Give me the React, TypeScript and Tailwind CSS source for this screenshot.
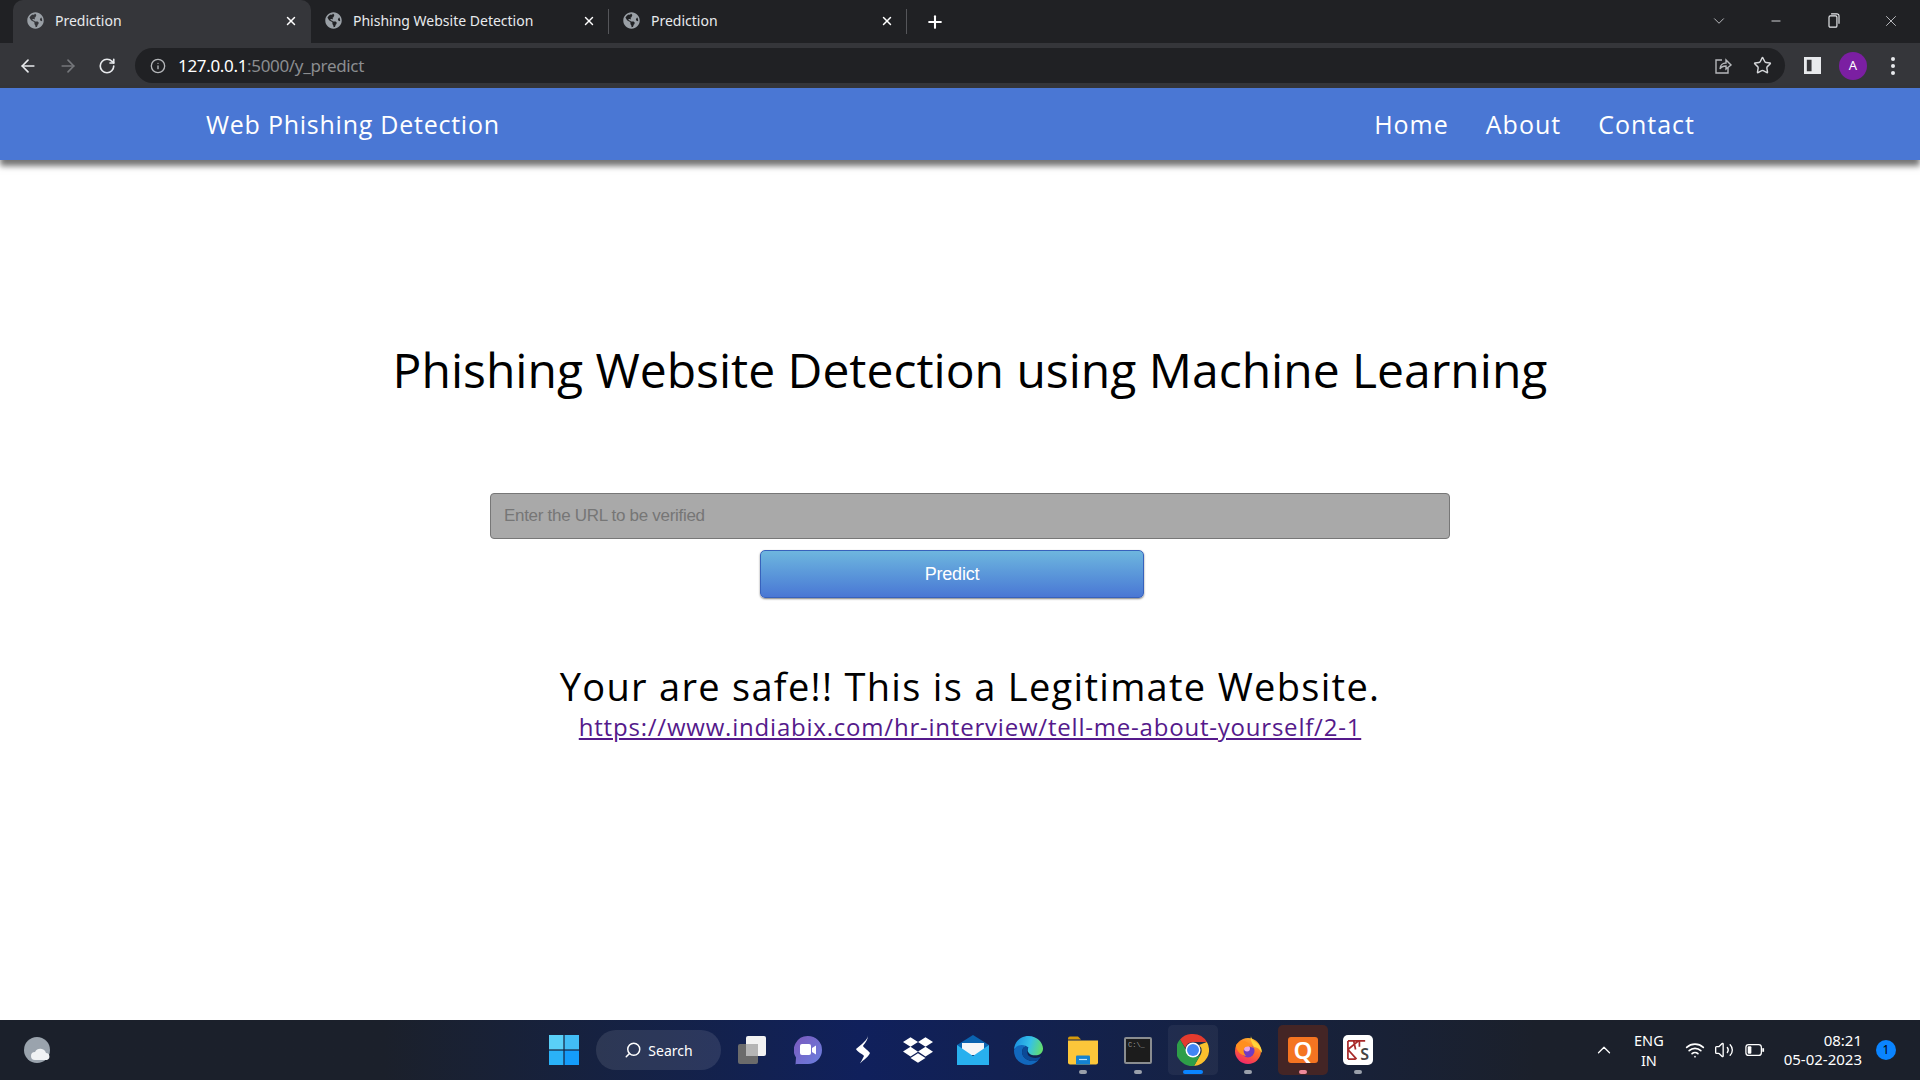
import { FaGlobeAmericas, FaDropbox } from "react-icons/fa";
import { ArrowLeft, ArrowRight, RotateCw, Info, Star, X, Plus, ChevronDown, Minus, ChevronUp, Search, Wifi, Volume2 } from "lucide-react";

const tabs = [
  { title: "Prediction", active: true },
  { title: "Phishing Website Detection", active: false },
  { title: "Prediction", active: false },
];

const Tab = ({ title, active, divider }: { title: string; active: boolean; divider: boolean }) => (
  <div
    className={`relative flex h-[43px] w-[298px] shrink-0 items-center pr-[13px] pb-[2px] pl-[17px] ${
      active ? "rounded-t-[10px] bg-[#35363a]" : ""
    }`}
  >
    <FaGlobeAmericas className="-ml-[3px] size-[17px] shrink-0 text-[#9aa0a6]" />
    <span className="ml-[11px] flex-1 truncate text-[14px] text-[#e8eaed]">{title}</span>
    <X className="size-[14px] text-white" strokeWidth={2.5} />
    {divider && <span className="absolute top-[9px] right-0 h-[25px] w-px bg-[#55565a]" />}
  </div>
);

const TabStrip = () => (
  <div className="flex h-[43px] items-center bg-[#202124] pl-[13px]">
    {tabs.map((t, i) => (
      <Tab key={i} title={t.title} active={t.active} divider={i > 0} />
    ))}
    <Plus className="ml-[18px] size-[20px] text-white" strokeWidth={2.5} />
    <div className="ml-auto flex items-center pb-[2px] text-[#e8eaed]">
      <ChevronDown className="mr-[41px] size-[18px]" strokeWidth={1} />
      <Minus className="mr-[45px] size-[14px]" strokeWidth={1.5} />
      <svg viewBox="0 0 14 18" className="mr-[42px] h-[15px] w-[12px]" fill="none" stroke="currentColor" strokeWidth="1.4">
        <rect x="1" y="3.5" width="9.5" height="13.5" rx="1.5" />
        <path d="M3.5 1h7a2.5 2.5 0 0 1 2.5 2.5V13" />
      </svg>
      <X className="mr-[20px] size-[18px]" strokeWidth={1} />
    </div>
  </div>
);

const Toolbar = () => (
  <div className="flex h-[45px] items-start bg-[#35363a] pt-[5px]">
    <div className="flex h-[35px] w-[135px] shrink-0 items-center pl-[18px]">
      <ArrowLeft className="size-[20px] text-[#e8eaed]" strokeWidth={2} />
      <ArrowRight className="ml-[20px] size-[20px] text-[#75777b]" strokeWidth={2} />
      <RotateCw className="ml-[20px] size-[18px] text-[#e8eaed]" strokeWidth={2.2} />
    </div>
    <div className="flex h-[35px] w-[1650px] shrink-0 items-center rounded-full bg-[#202124] pr-[13px] pl-[15px]">
      <Info className="size-[16px] text-[#b5b7ba]" strokeWidth={2} />
      <span className="ml-[12px] text-[17px] tracking-[-0.33px] text-white">
        127.0.0.1<span className="text-[#8b8d90]">:5000/y_predict</span>
      </span>
      <svg viewBox="0 0 20 20" className="ml-auto size-[20px] text-[#b5b7ba]" fill="none" stroke="currentColor" strokeWidth="1.4">
        <path d="M9 4H3v13h12v-5" />
        <path d="M7 13c0-4 3-6 6-6V4l5 5-5 4v-3c-3 0-5 1-6 3z" />
      </svg>
      <Star className="ml-[20px] size-[19px] text-[#d5d7da]" strokeWidth={1.8} />
    </div>
    <div className="flex h-[35px] flex-1 items-center">
      <svg viewBox="0 0 18 18" className="ml-[19px] size-[17px] text-[#e8eaed]">
        <path fill="currentColor" fillRule="evenodd" d="M0 0h18v18H0zM3 3v12h5V3z" />
      </svg>
      <div className="ml-[18px] flex size-[28px] items-center justify-center rounded-full bg-[#7b1fa2] text-[13px] text-white">
        A
      </div>
      <div className="ml-[24px] flex flex-col gap-[3px]">
        <span className="size-[4px] rounded-full bg-[#e8eaed]" />
        <span className="size-[4px] rounded-full bg-[#e8eaed]" />
        <span className="size-[4px] rounded-full bg-[#e8eaed]" />
      </div>
    </div>
  </div>
);

const Navbar = () => (
  <nav className="relative flex h-[72px] items-center justify-between bg-[#4a77d4] pt-[2px] pr-[225px] pl-[206px] shadow-[0_6px_6px_rgba(0,0,0,0.55)] [font-family:'Open_Sans',sans-serif]">
    <a className="text-[25px] tracking-[0.75px] text-white">Web Phishing Detection</a>
    <div className="flex gap-[37px] text-[25px] tracking-[1px] text-white">
      <a>Home</a>
      <a>About</a>
      <a>Contact</a>
    </div>
  </nav>
);

const Main = () => (
  <main className="flex flex-1 flex-col items-center bg-white pt-[180px] pl-[20px] [font-family:'Open_Sans',sans-serif]">
    <h1 className="text-[48px] leading-[60px] font-medium text-black">Phishing Website Detection using Machine Learning</h1>
    <form className="mt-[93px] flex w-[960px] flex-col items-center gap-[11px]">
      <input
        placeholder="Enter the URL to be verified"
        className="h-[46px] w-full rounded-[4px] border border-[#777] bg-[#a9a9a9] px-[13px] text-[17px] tracking-[-0.3px] text-black outline-none [font-family:'Liberation_Sans',sans-serif] placeholder:text-[#767676]"
      />
      <button
        type="button"
        className="mr-[36px] h-[48px] w-[384px] rounded-[5px] border border-[#3762bc] bg-gradient-to-b from-[#6eb6de] to-[#4a77d4] text-[18px] tracking-[-0.2px] text-white shadow-[0_1px_2px_rgba(0,0,0,0.5)] [font-family:'Liberation_Sans',sans-serif]"
      >
        Predict
      </button>
    </form>
    <p className="mt-[63px] text-[38px] leading-[50px] tracking-[1.3px] text-black">Your are safe!! This is a Legitimate Website.</p>
    <a className="text-[24px] leading-[32px] tracking-[0.79px] text-[#551a8b] underline">
      https://www.indiabix.com/hr-interview/tell-me-about-yourself/2-1
    </a>
  </main>
);

const TaskIcon = ({ children, mark, active, tint }: { children: React.ReactNode; mark?: string; active?: boolean; tint?: string }) => (
  <div className={`relative flex h-[50px] w-[50px] shrink-0 items-center justify-center rounded-[5px] ${active ? "bg-white/5" : ""} ${tint ?? ""}`}>
    {children}
    {mark && <span className={`absolute bottom-[1px] h-[4px] rounded-full ${mark}`} />}
  </div>
);

const Taskbar = () => (
  <footer className="flex h-[60px] items-center bg-gradient-to-r from-[#1b202b] from-[20%] via-[#10205c] via-[45%] to-[#1b202b] to-[80%] text-white [font-family:'Noto_Sans',sans-serif]">
    <svg viewBox="0 0 28 28" className="ml-[23px] size-[28px]">
      <circle cx="14" cy="14" r="13" fill="#9aa3ad" />
      <path d="M12 24a4 4 0 0 1 0-8 6 6 0 0 1 11 1 3.6 3.6 0 0 1 1 7z" fill="#f0f2f4" />
    </svg>
    <svg viewBox="0 0 30 30" className="ml-[498px] size-[30px]">
      <path fill="#5ad0f8" d="M0 0h14.4v14.4H0z" />
      <path fill="#42bdf6" d="M15.6 0H30v14.4H15.6z" />
      <path fill="#2ab2f8" d="M0 15.6h14.4V30H0z" />
      <path fill="#149cfa" d="M15.6 15.6H30V30H15.6z" />
    </svg>
    <div className="ml-[17px] flex h-[40px] w-[125px] items-center justify-center gap-[6px] rounded-full bg-white/10 text-[14px]">
      <Search className="size-[18px] -scale-x-100" strokeWidth={2} />
      Search
    </div>
    <div className="ml-[7px] flex gap-[5px]">
      <TaskIcon>
        <svg viewBox="0 0 30 30" className="size-[30px]">
          <rect x="0" y="9" width="20" height="20" rx="2" fill="#6b6b6b" />
          <rect x="8" y="1" width="20" height="20" rx="2" fill="#f2f2f2" />
          <rect x="8" y="9" width="12" height="12" fill="#b5b5b5" />
        </svg>
      </TaskIcon>
      <TaskIcon>
        <svg viewBox="0 0 28 29" className="h-[29px] w-[28px]">
          <defs>
            <linearGradient id="chat1" x1="0" y1="0" x2="1" y2="1">
              <stop offset="0" stopColor="#7b58bd" />
              <stop offset="1" stopColor="#6a80df" />
            </linearGradient>
          </defs>
          <path d="M14 0a14 14 0 0 1 0 28H2.5l-1 .5.5-7A14 14 0 0 1 14 0z" fill="url(#chat1)" />
          <rect x="6" y="8" width="11" height="11" rx="2" fill="#fff" />
          <path d="M18 12l4-2.5v9L18 16z" fill="#fff" />
        </svg>
      </TaskIcon>
      <TaskIcon>
        <svg viewBox="0 0 14 30" className="h-[30px] w-[14px]">
          <path d="M12 0c0 4-4 7-6 9L0 14c1 3 7 5 8 7-1 2-3 6-5 9 2-4 9-7 11-12-2-3-6-5-7-7 2-3 5-6 5-11z" fill="#fff" />
        </svg>
      </TaskIcon>
      <TaskIcon>
        <FaDropbox className="size-[30px] text-white" />
      </TaskIcon>
      <TaskIcon>
        <svg viewBox="0 0 32 30" className="h-[30px] w-[32px]">
          <path d="M0 10L16 0l16 10v4H0z" fill="#0a63b0" />
          <path d="M5 8h22v12H5z" fill="#f4f6f8" />
          <path d="M0 10l16 11 16-11v20H0z" fill="#28b0ee" />
        </svg>
      </TaskIcon>
      <TaskIcon>
        <svg viewBox="0 0 32 32" className="size-[31px]">
          <defs>
            <linearGradient id="edge1" x1="0" y1="0.3" x2="1" y2="0.5">
              <stop offset="0" stopColor="#1a8ee0" />
              <stop offset="0.55" stopColor="#35c1e8" />
              <stop offset="1" stopColor="#62dd6e" />
            </linearGradient>
          </defs>
          <path d="M1 16C1 7 8 1 16 1c9 0 15 7 15 13 0 5-4 7-8 7-3 0-6-1-7-3-2-2 0-4-1-5C9 12 1 12 1 16z" fill="url(#edge1)" />
          <path d="M1 16c1-5 7-7 12-5-5 3-5 11 1 14 5 3 10 2 13 0-3 4-7 6-11 6C8 31 1 25 1 16z" fill="#1268bd" />
          <path d="M13 11c-5 3-5 11 1 14 5 3 10 2 13 0l2-3c-3 2-7 2-10 1-5-1-5-7-3-10z" fill="#0b4a97" />
        </svg>
      </TaskIcon>
      <TaskIcon mark="w-[8px] bg-[#9aa0ab]">
        <svg viewBox="0 0 30 28" className="h-[29px] w-[30px]">
          <path d="M0 2a2 2 0 0 1 2-2h8l3 3h-13z" fill="#d69a0c" />
          <path d="M0 4h30v22a2 2 0 0 1-2 2H2a2 2 0 0 1-2-2z" fill="#fcc63a" />
          <path d="M8 20a1 1 0 0 1 1-1h12a1 1 0 0 1 1 1v8H8z" fill="#1482d0" />
          <path d="M11 23h8" stroke="#bfe3fa" strokeWidth="1.2" />
        </svg>
      </TaskIcon>
      <TaskIcon mark="w-[8px] bg-[#9aa0ab]">
        <div className="h-[27px] w-[28px] rounded-[2px] border-2 border-[#8a8d90] bg-[#1c1c1c] pl-[2px] text-left font-mono text-[7px] leading-[12px] text-[#9a9a9a]">
          C:\_
        </div>
      </TaskIcon>
      <TaskIcon mark="w-[20px] bg-[#0a84ff]" active>
        <svg viewBox="0 0 32 32" className="size-[32px]">
          <path d="M16 0a16 16 0 0 1 13.9 8H16a8 8 0 0 0-7.7 6L3 5.5A16 16 0 0 1 16 0z" fill="#e33b2e" />
          <path d="M29.9 8A16 16 0 0 1 17 32l6.9-12A8 8 0 0 0 22 11z" fill="#fbc02d" />
          <path d="M3 5.5l7 12a8 8 0 0 0 13.9 2.5L17 32A16 16 0 0 1 3 5.5z" fill="#2e9e48" />
          <circle cx="16" cy="16" r="7.5" fill="#fff" />
          <circle cx="16" cy="16" r="6" fill="#4285f4" />
        </svg>
      </TaskIcon>
      <TaskIcon mark="w-[8px] bg-[#9aa0ab]">
        <svg viewBox="0 0 28 28" className="size-[28px]">
          <defs>
            <linearGradient id="fox1" x1="0.7" y1="0" x2="0.3" y2="1">
              <stop offset="0" stopColor="#ffb52e" />
              <stop offset="0.5" stopColor="#ff6a2a" />
              <stop offset="1" stopColor="#f0246e" />
            </linearGradient>
          </defs>
          <circle cx="14" cy="15" r="13" fill="url(#fox1)" />
          <path d="M17 0c0 3 3 5 6 7 4 3 5 7 5 10-2-4-5-6-8-6-2-4-4-7-3-11z" fill="#ffd43a" />
          <circle cx="14" cy="15" r="6.5" fill="#6f3bc2" />
          <circle cx="13" cy="12.5" r="3" fill="#e9a6e6" />
          <path d="M2 9c3-4 9-5 12-2 3 1 4 3 5 5-4-2-8-2-9 1-1 2 0 5 2 7-6-1-10-6-10-11z" fill="#ff8f1f" />
        </svg>
      </TaskIcon>
      <TaskIcon mark="w-[8px] bg-[#f08a9a]" tint="bg-[#442525]">
        <div className="flex h-[26px] w-[30px] items-center justify-center rounded-[3px] bg-[#f47421] text-[24px] leading-none font-semibold text-white">
          Q
        </div>
      </TaskIcon>
      <TaskIcon mark="w-[8px] bg-[#9aa0ab]">
        <div className="relative flex size-[30px] items-end justify-end rounded-[5px] bg-white pr-[4px] pb-[3px] text-[16px] leading-none font-semibold text-[#444]">
          <svg viewBox="0 0 24 24" className="absolute top-[3px] left-[3px] size-[23px]" fill="none" stroke="#a82a2a" strokeWidth="1.8">
            <path d="M2 3h18M2 3v19M2 12l11-9M2 12l9 10M8 3l2 9M14 3v6M2 22h8" />
          </svg>
          <span className="relative">S</span>
        </div>
      </TaskIcon>
    </div>
    <div className="ml-auto flex items-center">
      <ChevronUp className="size-[22px]" strokeWidth={1.4} />
      <div className="ml-[19px] flex flex-col items-center text-[14.5px] leading-[20px]">
        <span>ENG</span>
        <span>IN</span>
      </div>
      <Wifi className="ml-[21px] size-[20px]" strokeWidth={2} />
      <Volume2 className="ml-[9px] size-[20px]" strokeWidth={1.6} />
      <svg viewBox="0 0 22 14" className="ml-[11px] h-[14px] w-[20px]" fill="none">
        <rect x="1" y="1" width="17" height="12" rx="3" stroke="#fff" strokeWidth="1.4" />
        <rect x="3" y="3" width="4" height="8" rx="1" fill="#fff" />
        <path d="M20 5v4" stroke="#fff" strokeWidth="2" />
      </svg>
      <div className="ml-[19px] flex flex-col items-end text-[15px] leading-[19px]">
        <span>08:21</span>
        <span>05-02-2023</span>
      </div>
      <div className="mr-[24px] ml-[14px] flex size-[20px] items-center justify-center rounded-full bg-[#0a84ff] text-[12px] text-black">
        1
      </div>
    </div>
  </footer>
);

export default function App() {
  return (
    <div className="flex h-[1080px] w-[1920px] flex-col overflow-hidden [font-family:'Noto_Sans',sans-serif]">
      <TabStrip />
      <Toolbar />
      <Navbar />
      <Main />
      <Taskbar />
    </div>
  );
}
